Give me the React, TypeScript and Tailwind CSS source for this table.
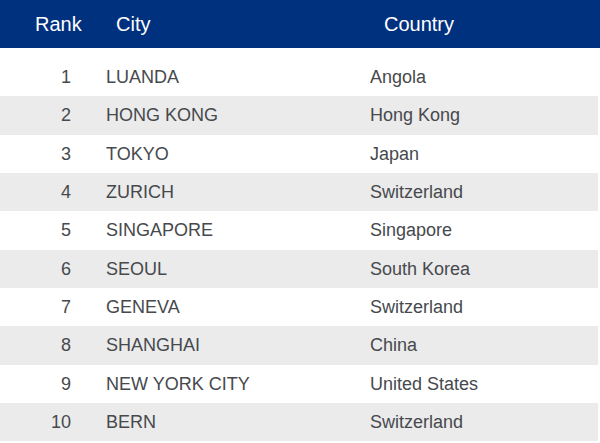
const rows = [
  { rank: 1, city: 'LUANDA', country: 'Angola' },
  { rank: 2, city: 'HONG KONG', country: 'Hong Kong' },
  { rank: 3, city: 'TOKYO', country: 'Japan' },
  { rank: 4, city: 'ZURICH', country: 'Switzerland' },
  { rank: 5, city: 'SINGAPORE', country: 'Singapore' },
  { rank: 6, city: 'SEOUL', country: 'South Korea' },
  { rank: 7, city: 'GENEVA', country: 'Switzerland' },
  { rank: 8, city: 'SHANGHAI', country: 'China' },
  { rank: 9, city: 'NEW YORK CITY', country: 'United States' },
  { rank: 10, city: 'BERN', country: 'Switzerland' },
];

const App = () => {
  return (
    <div className="w-[600px] h-[443px] bg-white overflow-hidden font-['Liberation_Sans',Arial,sans-serif]">
      <div className="flex items-center h-[48px] bg-[#00317f] text-white text-[20px]">
        <span className="w-[116px] pl-[35px]">Rank</span>
        <span className="w-[268px]">City</span>
        <span>Country</span>
      </div>
      <div className="pt-[10px] w-[598px]">
        {rows.map((r, i) => (
          <div
            key={r.rank}
            className={`flex items-center h-[38.33px] pt-px text-[18px] text-[#46494d] ${i % 2 === 1 ? 'bg-[#ebebeb]' : 'bg-white'}`}
          >
            <span className="w-[71px] text-right">{r.rank}</span>
            <span className="w-[299px] pl-[35px]">{r.city}</span>
            <span>{r.country}</span>
          </div>
        ))}
      </div>
    </div>
  );
};

export default App;
